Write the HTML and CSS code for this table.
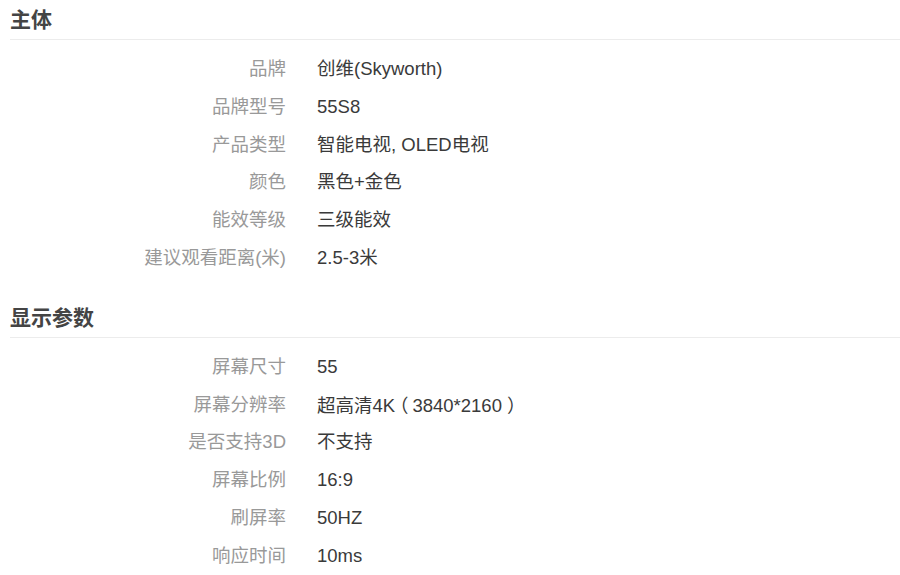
FILE: index.html
```html
<!DOCTYPE html>
<html lang="zh-CN">
<head>
<meta charset="utf-8">
<title>参数</title>
<link rel="stylesheet" href="styles.css">
</head>
<body>
<div class="specs">
  <section class="group">
    <h2 class="group-title">主体</h2>
    <dl class="rows">
      <div class="row"><dt>品牌</dt><dd>创维(Skyworth)</dd></div>
      <div class="row"><dt>品牌型号</dt><dd>55S8</dd></div>
      <div class="row"><dt>产品类型</dt><dd>智能电视, OLED电视</dd></div>
      <div class="row"><dt>颜色</dt><dd>黑色+金色</dd></div>
      <div class="row"><dt>能效等级</dt><dd>三级能效</dd></div>
      <div class="row"><dt>建议观看距离(米)</dt><dd>2.5-3米</dd></div>
    </dl>
  </section>
  <section class="group">
    <h2 class="group-title">显示参数</h2>
    <dl class="rows">
      <div class="row"><dt>屏幕尺寸</dt><dd>55</dd></div>
      <div class="row"><dt>屏幕分辨率</dt><dd>超高清4K<span class="paren paren-open">（</span>3840*2160<span class="paren paren-close">）</span></dd></div>
      <div class="row"><dt>是否支持3D</dt><dd>不支持</dd></div>
      <div class="row"><dt>屏幕比例</dt><dd>16:9</dd></div>
      <div class="row"><dt>刷屏率</dt><dd>50HZ</dd></div>
      <div class="row"><dt>响应时间</dt><dd>10ms</dd></div>
    </dl>
  </section>
</div>
</body>
</html>
```

FILE: styles.css
```css
html, body {
  margin: 0;
  padding: 0;
  background: #fff;
}
body {
  font-family: "Liberation Sans", "Noto Sans CJK SC", sans-serif;
  color: #333;
}
.specs {
  padding-left: 10px;
}
.group + .group {
  margin-top: 21px;
}
.group-title {
  margin: 0;
  height: 39px;
  line-height: 40px;
  font-size: 21px;
  font-weight: bold;
  color: #444;
  border-bottom: 1px solid #ececec;
  box-sizing: content-box;
}
.rows {
  margin: 10px 0 0;
  padding: 0;
}
.row {
  display: flex;
  height: 37.8px;
  line-height: 37.8px;
  font-size: 18.5px;
}
.row dt {
  width: 276px;
  text-align: right;
  color: #999;
  margin: 0;
  flex: none;
}
.row dd {
  margin: 0 0 0 31px;
  color: #3a3a3a;
  white-space: nowrap;
}
.paren {
  font-family: "Noto Sans CJK SC", sans-serif;
  font-feature-settings: "halt";
}
.paren-open {
  margin-left: 4px;
  margin-right: 4px;
}
.paren-close {
  margin-left: 5px;
}
```
